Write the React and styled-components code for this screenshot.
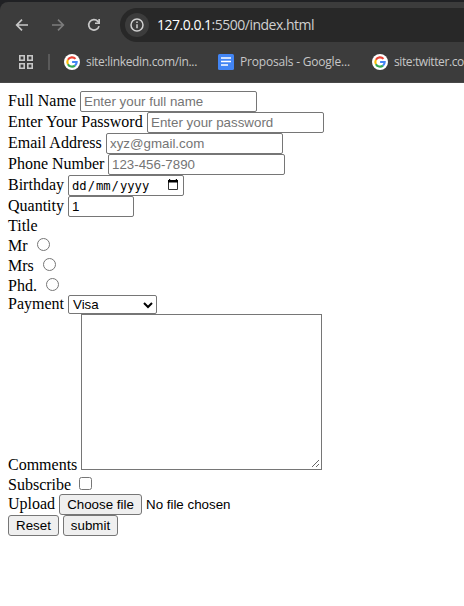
import React from "react";
import styled, { createGlobalStyle, css } from "styled-components";

const Global = createGlobalStyle`
  html, body { margin: 0; background: #fff; overflow: hidden; }
  *, *::before, *::after { box-sizing: border-box; }
`;

const Browser = styled.div`
  width: 464px;
  height: 606px;
  overflow: hidden;
  background: #fff;
`;
const Chrome = styled.header`
  height: 83px;
  padding-top: 2px;
  background: #202124;
  font-family: "Open Sans", sans-serif;
`;
const ChromeBody = styled.div`
  height: 81px;
  background: #3c3c3c;
  border-top-left-radius: 8px;
  border-bottom: 1px solid #484848;
`;
const Toolbar = styled.div`
  display: flex;
  align-items: center;
  height: 46px;
  padding-left: 14px;
`;
const NavButton = styled.span`
  display: flex;
  width: 16px;
  height: 16px;
  margin-right: 20px;
  color: ${(p) => (p.$dim ? "#7c7c7c" : "#c7c7c7")};
`;
const AddressBar = styled.div`
  display: flex;
  align-items: center;
  flex: 1;
  height: 34px;
  margin-left: -2px;
  padding-left: 5px;
  border-radius: 17px 0 0 17px;
  background: #282828;
`;
const InfoBadge = styled.span`
  display: flex;
  align-items: center;
  justify-content: center;
  width: 24px;
  height: 24px;
  margin-right: 8px;
  border-radius: 50%;
  background: #3c3c3c;
`;
const Url = styled.span`
  font-size: 14px;
  line-height: 20px;
  letter-spacing: ${(p) => p.$track || "0"};
  color: ${(p) => (p.$host ? "#ffffff" : "#d0d0d0")};
  white-space: nowrap;
`;
const Bookmarks = styled.div`
  display: flex;
  align-items: center;
  height: 28px;
  padding-left: 19px;
  white-space: nowrap;
  > svg { flex: none; }
`;
const Divider = styled.span`
  width: 2px;
  height: 16px;
  margin: 0 14px 0 15px;
  background: #5a5a5a;
  flex: none;
`;
const Bookmark = styled.span`
  display: flex;
  align-items: center;
  flex: none;
  gap: 6px;
  width: ${(p) => p.$width};
  font-size: 12px;
  line-height: 16px;
  letter-spacing: ${(p) => p.$track};
  color: #c7c7c7;
  svg { flex: none; }
`;

const Form = styled.form`
  padding: 8px 8px 0;
  font-family: "Liberation Serif", serif;
  font-size: 16px;
  color: #000;
`;
const Row = styled.div`
  display: flex;
  align-items: flex-start;
  height: ${(p) => p.$height || "21px"};
`;
const Label = styled.label`
  width: ${(p) => p.$width || "auto"};
  flex: none;
  line-height: 18px;
  margin-top: ${(p) => p.$top || "1px"};
  white-space: nowrap;
`;
const control = css`
  margin: 0;
  border: 1px solid #767676;
  border-radius: 2px;
  background: #fff;
  color: #000;
  font-family: "Liberation Sans", sans-serif;
  font-size: 13.333px;
  line-height: 15px;
  outline: none;
`;
const Input = styled.input`
  ${control}
  width: ${(p) => p.$width || "177px"};
  height: 21px;
  padding: 1px 3px;
  &::placeholder { color: #757575; opacity: 1; }
`;
const DateField = styled.div`
  ${control}
  display: flex;
  align-items: center;
  width: 116px;
  height: 21px;
  padding: 1px 4px 0 2px;
  font-family: "DejaVu Sans Mono", monospace;
  font-size: 12.17px;
  svg { margin: -2px 0 0 auto; }
`;
const DatePart = styled.span`
  padding: 0 1px;
`;
const Choice = styled.input`
  width: 13px;
  height: 13px;
  margin: ${(p) => p.$top} 0 0;
`;
const SelectBox = styled.div`
  ${control}
  display: flex;
  align-items: center;
  justify-content: space-between;
  width: 89px;
  height: 19px;
  padding: 0 3px 0 4px;
`;
const Comments = styled.div`
  ${control}
  display: flex;
  align-items: flex-end;
  justify-content: flex-end;
  width: 241px;
  height: 156px;
  border-radius: 0;
`;
const Button = styled.button`
  ${control}
  width: ${(p) => p.$width};
  height: 21px;
  margin-right: 4px;
  padding: 0;
  border-radius: 3px;
  background: #efefef;
`;
const FileStatus = styled.span`
  font-family: "Liberation Sans", sans-serif;
  font-size: 13.333px;
  line-height: 21px;
`;

const Arrow = ({ flip }) => (
  <svg width="16" height="16" viewBox="0 0 16 16" fill="none" stroke="currentColor" strokeWidth="1.7"
    transform={flip ? "scale(-1 1)" : undefined}>
    <path d="M14 8H3M8 2.7 2.7 8 8 13.3" />
  </svg>
);
const Reload = () => (
  <svg width="16" height="16" viewBox="0 0 16 16">
    <path d="M13 9.1A5.2 5.2 0 1 1 11.8 4.4L13 5.7" fill="none" stroke="currentColor" strokeWidth="1.7" />
    <path d="M14 2v5H9V5.4h3.3V2z" fill="currentColor" />
  </svg>
);
const Info = () => (
  <svg width="14" height="14" viewBox="0 0 14 14" fill="none" stroke="#d0d0d0" strokeWidth="1.5">
    <circle cx="7" cy="7" r="6" />
    <path d="M7 6.2v4M7 3.5v1.5" />
  </svg>
);
const Apps = () => (
  <svg width="14" height="14" viewBox="0 0 14 14" fill="none" stroke="#c7c7c7" strokeWidth="1.6">
    <path d="M.8.8h4.4v4.4H.8zM8.8.8h4.4v4.4H8.8zM.8 8.8h4.4v4.4H.8zM8.8 8.8h4.4v4.4H8.8z" />
  </svg>
);
const GoogleIcon = () => (
  <svg width="16" height="16" viewBox="0 0 16 16" fill="none" strokeWidth="2.1">
    <circle cx="8" cy="8" r="8" fill="#fff" />
    <path d="M3.9 5.8A4.7 4.7 0 0 1 11.5 4.9" stroke="#ea4335" />
    <path d="M3.9 5.8a4.7 4.7 0 0 0 0 4.4" stroke="#fbbc05" />
    <path d="M3.9 10.2a4.7 4.7 0 0 0 7.1 1.4" stroke="#34a853" />
    <path d="M11 11.6A4.7 4.7 0 0 0 12.7 8H8.1" stroke="#4285f4" />
  </svg>
);
const DocsIcon = () => (
  <svg width="16" height="16" viewBox="0 0 16 16">
    <rect width="16" height="16" rx="1.5" fill="#4285f4" />
    <path d="M3 4h10M3 7.5h10M3 11h7" stroke="#fff" strokeWidth="1.7" />
  </svg>
);
const Calendar = () => (
  <svg width="12" height="12" viewBox="0 0 12 12">
    <path d="M1.5 3v7.5h9V3" fill="none" stroke="#333" strokeWidth="1" />
    <path d="M1 1h1V0h1.2v1h5.6V0H10v1h1v2.6H1z" />
  </svg>
);
const Chevron = () => (
  <svg width="10" height="8" viewBox="0 0 10 8" fill="none" stroke="#000" strokeWidth="2">
    <path d="m1 2 4 4 4-4" />
  </svg>
);
const Grip = () => (
  <svg width="10" height="10" viewBox="0 0 10 10" stroke="#666" strokeWidth="1">
    <path d="m1 8 7-7M5 8l3-3" />
  </svg>
);

const textRows = [
  { label: "Full Name", type: "text", hint: "Enter your full name", width: "72px" },
  { label: "Enter Your Password", type: "password", hint: "Enter your password", width: "139px" },
  { label: "Email Address", type: "email", hint: "xyz@gmail.com", width: "98px" },
  { label: "Phone Number", type: "tel", hint: "123-456-7890", width: "100px" },
];
const titles = [
  { label: "Mr", width: "29px" },
  { label: "Mrs", width: "35px" },
  { label: "Phd.", width: "38px" },
];

export default function App() {
  return (
    <Browser>
      <Global />
      <Chrome>
        <ChromeBody>
          <Toolbar>
            <NavButton><Arrow /></NavButton>
            <NavButton $dim><Arrow flip /></NavButton>
            <NavButton><Reload /></NavButton>
            <AddressBar>
              <InfoBadge><Info /></InfoBadge>
              <Url $host $track="-0.5px">127.0.0.1</Url>
              <Url $track="-0.5px">:5500/index.html</Url>
            </AddressBar>
          </Toolbar>
          <Bookmarks>
            <Apps />
            <Divider />
            <Bookmark $width="154px" $track="-0.33px"><GoogleIcon />site:linkedin.com/in...</Bookmark>
            <Bookmark $width="154px" $track="-0.2px"><DocsIcon />Proposals - Google...</Bookmark>
            <Bookmark $width="92px" $track="-0.4px"><GoogleIcon />site:twitter.co</Bookmark>
          </Bookmarks>
        </ChromeBody>
      </Chrome>
      <Form onSubmit={(e) => e.preventDefault()}>
        {textRows.map((r) => (
          <Row key={r.label}>
            <Label $width={r.width}>{r.label}</Label>
            <Input type={r.type} placeholder={r.hint} />
          </Row>
        ))}
        <Row>
          <Label $width="60px">Birthday</Label>
          <DateField>
            <DatePart>dd</DatePart>/<DatePart>mm</DatePart>/<DatePart>yyyy</DatePart>
            <Calendar />
          </DateField>
        </Row>
        <Row>
          <Label $width="60px">Quantity</Label>
          <Input $width="66px" defaultValue="1" />
        </Row>
        <Row $height="18px"><Label $top="0">Title</Label></Row>
        {titles.map((t) => (
          <Row key={t.label} $height="20px">
            <Label $width={t.width} $top="2px">{t.label}</Label>
            <Choice type="radio" name="title" $top="3px" />
          </Row>
        ))}
        <Row $height="19px">
          <Label $width="60px" $top="0">Payment</Label>
          <SelectBox>Visa<Chevron /></SelectBox>
        </Row>
        <Row $height="160px">
          <Label $width="73px" $top="142px">Comments</Label>
          <Comments><Grip /></Comments>
        </Row>
        <Row $height="20px">
          <Label $width="71px" $top="2px">Subscribe</Label>
          <Choice type="checkbox" $top="3px" />
        </Row>
        <Row>
          <Label $width="51px">Upload</Label>
          <Button type="button" $width="83px">Choose file</Button>
          <FileStatus>No file chosen</FileStatus>
        </Row>
        <Row>
          <Button type="reset" $width="51px">Reset</Button>
          <Button type="submit" $width="55px">submit</Button>
        </Row>
      </Form>
    </Browser>
  );
}
